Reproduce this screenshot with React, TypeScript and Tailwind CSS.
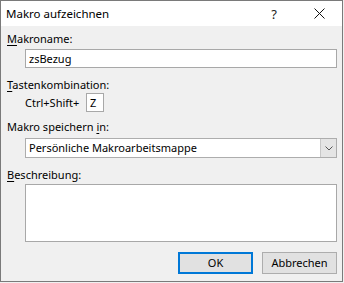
const Mn = ({ children }: { children: string }) => <span className="underline underline-offset-2">{children}</span>;

const App = () => {
  return (
    <div className="w-[344px] h-[283px] bg-[#f0f0f0]">
      <div
        className="w-[343px] h-[282px] border border-[#7a7a7a] bg-[#f0f0f0] flex flex-col text-[11px] text-black"
        style={{ fontFamily: '"Noto Sans", "Open Sans", sans-serif' }}
      >
        {/* title bar */}
        <div className="h-[25px] bg-white flex items-center shrink-0">
          <span className="pl-[5px] text-[11.5px] leading-[16px]">Makro aufzeichnen</span>
          <span className="ml-auto mr-[37px] text-[13px] leading-[16px] text-[#222]">?</span>
          <svg width="11" height="11" viewBox="0 0 11 11" className="mr-[17px]">
            <path d="M0.5 0.5 L10.5 10.5 M10.5 0.5 L0.5 10.5" stroke="#111" strokeWidth="1" />
          </svg>
        </div>

        {/* body */}
        <div className="flex flex-col pl-[6px]">
          <div className="mt-[5px] h-[16px] leading-[16px]">
            <Mn>M</Mn>akroname:
          </div>
          <div className="mt-[2px] ml-[18px] w-[312px] h-[19px] border border-[#a8a8a8] bg-white flex items-center pl-[3px] leading-[16px]">
            zsBezug
          </div>

          <div className="mt-[9px] h-[16px] leading-[16px]">
            <Mn>T</Mn>astenkombination:
          </div>
          <div className="ml-[18px] h-[19px] flex items-center">
            <span className="leading-[16px] w-[61px]">Ctrl+Shift+</span>
            <div className="w-[18px] h-[19px] border border-[#a8a8a8] bg-white flex items-center pl-[3px] leading-[16px]">
              Z
            </div>
          </div>

          <div className="mt-[7px] h-[16px] leading-[16px]">
            Makro speichern <Mn>i</Mn>n:
          </div>
          <div className="mt-[3px] ml-[18px] w-[312px] h-[20px] border border-[#adadad] bg-white flex items-stretch">
            <span className="flex-1 flex items-center pl-[3px] leading-[16px]">Persönliche Makroarbeitsmappe</span>
            <span className="w-[16px] bg-[#e5e5e5] border-l border-[#c8c8c8] flex items-center justify-center">
              <svg width="8" height="5" viewBox="0 0 8 5">
                <path d="M0.5 0.5 L4 4 L7.5 0.5" fill="none" stroke="#555" strokeWidth="1" />
              </svg>
            </span>
          </div>

          <div className="mt-[9px] h-[16px] leading-[16px]">
            <Mn>B</Mn>eschreibung:
          </div>
          <div className="mt-[1px] ml-[18px] w-[312px] h-[58px] border border-[#a8a8a8] bg-white" />

          <div className="mt-[10px] flex justify-end gap-[9px] pr-[5px]">
            <button className="w-[75px] h-[22px] border-2 border-[#0078d7] bg-[#e1e1e1] leading-[16px]">OK</button>
            <button className="w-[75px] h-[22px] border border-[#adadad] bg-[#e1e1e1] leading-[16px]">Abbrechen</button>
          </div>
        </div>
      </div>
    </div>
  );
};

export default App;
